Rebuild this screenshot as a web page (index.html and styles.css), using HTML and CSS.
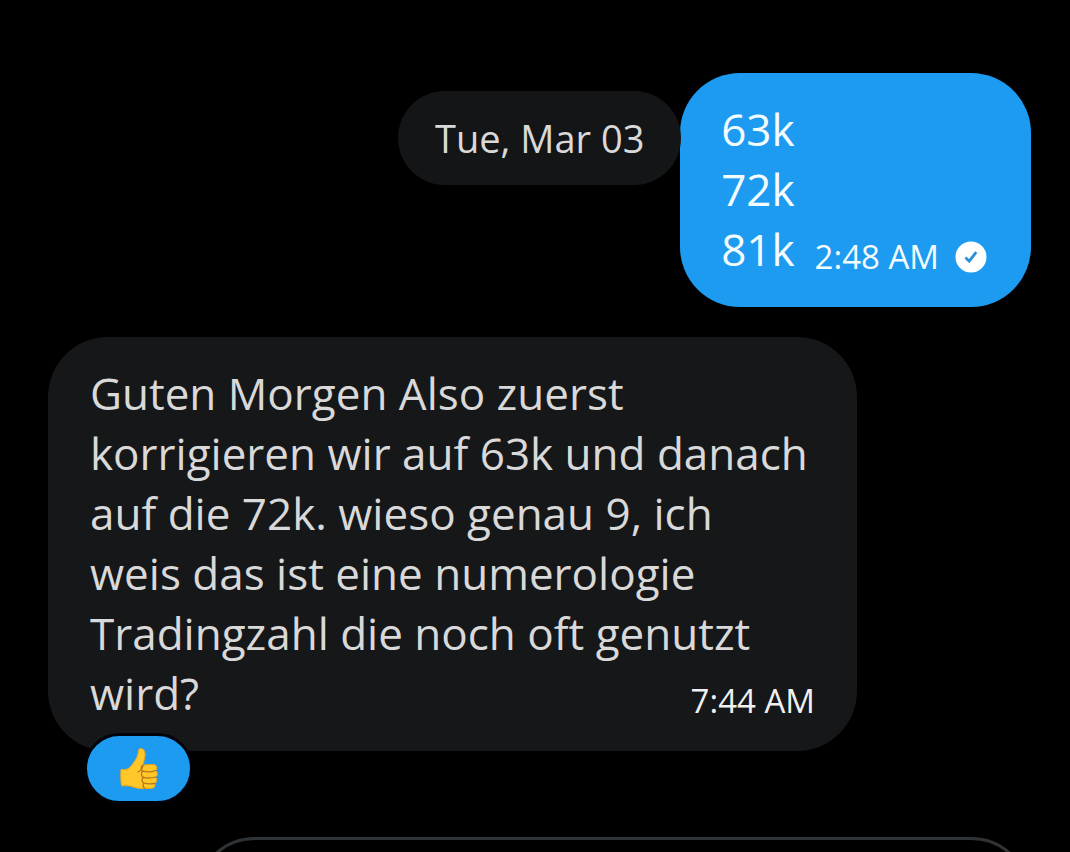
FILE: index.html
```html
<!DOCTYPE html>
<html lang="de">
<head>
<meta charset="utf-8">
<meta name="viewport" content="width=device-width, initial-scale=1">
<title>Chat</title>
<link rel="stylesheet" href="styles.css">
</head>
<body>
<main class="thread">
  <time class="date">Tue, Mar 03</time>
  <article class="bubble sent">
    <p class="text">63k<br>72k<br>81k</p>
    <footer class="meta">
      <time>2:48 AM</time>
      <svg class="seen" viewBox="0 0 32 32" role="img" aria-label="Seen"><circle cx="16" cy="16" r="15.5" fill="#fff"/><path d="M10.500 16.500l3.700 3.700 7-9" fill="none" stroke="#2a8fd4" stroke-width="2.800"/></svg>
    </footer>
  </article>
  <article class="bubble received">
    <p class="text">Guten Morgen Also zuerst<br>korrigieren wir auf 63k und danach<br>auf die 72k. wieso genau 9, ich<br>weis das ist eine numerologie<br>Tradingzahl die noch oft genutzt<br>wird?</p>
    <footer class="meta"><time>7:44 AM</time></footer>
    <button class="reaction" type="button" aria-label="Thumbs up">
      <svg class="thumb" viewBox="0 0 40 44">
        <path d="M2 22.500C7 23 10 22 12 19C14 16 18 12 19 7C19.500 4 19.500 1.500 21.500 1.500C25 1.500 26.500 5 26 9C25.500 12.500 24.500 15 24 18L34 17.500C38 17.500 39 22 36.500 23.500C39 25 39 29 36.500 30C38.500 32 38 35.500 35.500 36.500C37 39 35 41.500 31.500 41.500H21C16 41.500 14 39 9 38.800H2.500C1.800 34 1.500 28 2 22.500Z" fill="#ffc828" stroke="#eda21b" stroke-width="1"/>
        <path d="M24 18C21.500 20 21.500 23 24 24.200C21.500 26 22 29.500 24.500 30.300C22.500 32 22.500 35 25 36C23.500 38 24 40.500 26 41.300M24 24.200C28 25.300 33 25 36.500 23.500M24.500 30.300C28 31.300 33 31 36.500 30M25 36C28 37 32 37 35.500 36.500M24 18C24 21 22 23.500 19 25" fill="none" stroke="#b9741e" stroke-width="1.300" stroke-linecap="round"/>
      </svg>
    </button>
  </article>
  <article class="bubble outline"></article>
</main>
</body>
</html>
```
FILE: styles.css
```css
* {
  box-sizing: border-box;
}

body {
  margin: 0;
  background: #000;
  color: #d9d9d9;
  font-family: "Open Sans", "Noto Sans", sans-serif;
}

.thread {
  position: relative;
  display: flex;
  flex-direction: column;
  height: 100vh;
  padding: 73px 39px 0 48px;
  overflow: hidden;
}

/* Floating date pill, kept above the messages */
.date {
  position: absolute;
  z-index: 1;
  top: 91px;
  left: 398px;
  padding: 20px 37px;
  border-radius: 48px;
  background: #141517;
  font-size: 38px;
  line-height: 54px;
  white-space: nowrap;
}

.bubble {
  position: relative;
  display: flex;
  flex-shrink: 0;
  border-radius: 60px;
}

.sent {
  align-self: flex-end;
  gap: 20px;
  padding: 26px 44px 28px 41px;
  background: #1d9bf0;
  color: #f3fdff;
}

.received {
  align-self: flex-start;
  width: 82.3%;
  margin-top: 30px;
  padding: 26px 42px 28px;
  background: #161719;
}

.text {
  margin: 0;
  font-size: 44px;
  line-height: 60px;
  white-space: nowrap;
}

.meta {
  display: flex;
  align-items: center;
  align-self: flex-end;
  gap: 16px;
  font-size: 33px;
  line-height: 44px;
  white-space: nowrap;
}

.received .meta {
  position: absolute;
  right: 42px;
  bottom: 28px;
  color: #f0f0f2;
}

.seen {
  width: 32px;
  height: 32px;
}

.reaction {
  position: absolute;
  left: 36px;
  bottom: -53px;
  display: flex;
  align-items: center;
  justify-content: center;
  width: 109px;
  height: 71px;
  padding: 0;
  border: 3px solid #02040c;
  border-radius: 36px;
  background: #1d9bf0;
}

.thumb {
  width: 40px;
  height: 44px;
}

.outline {
  align-self: flex-end;
  width: 85%;
  height: 120px;
  margin-top: 86px;
  border: 3px solid #2f3336;
}
```
